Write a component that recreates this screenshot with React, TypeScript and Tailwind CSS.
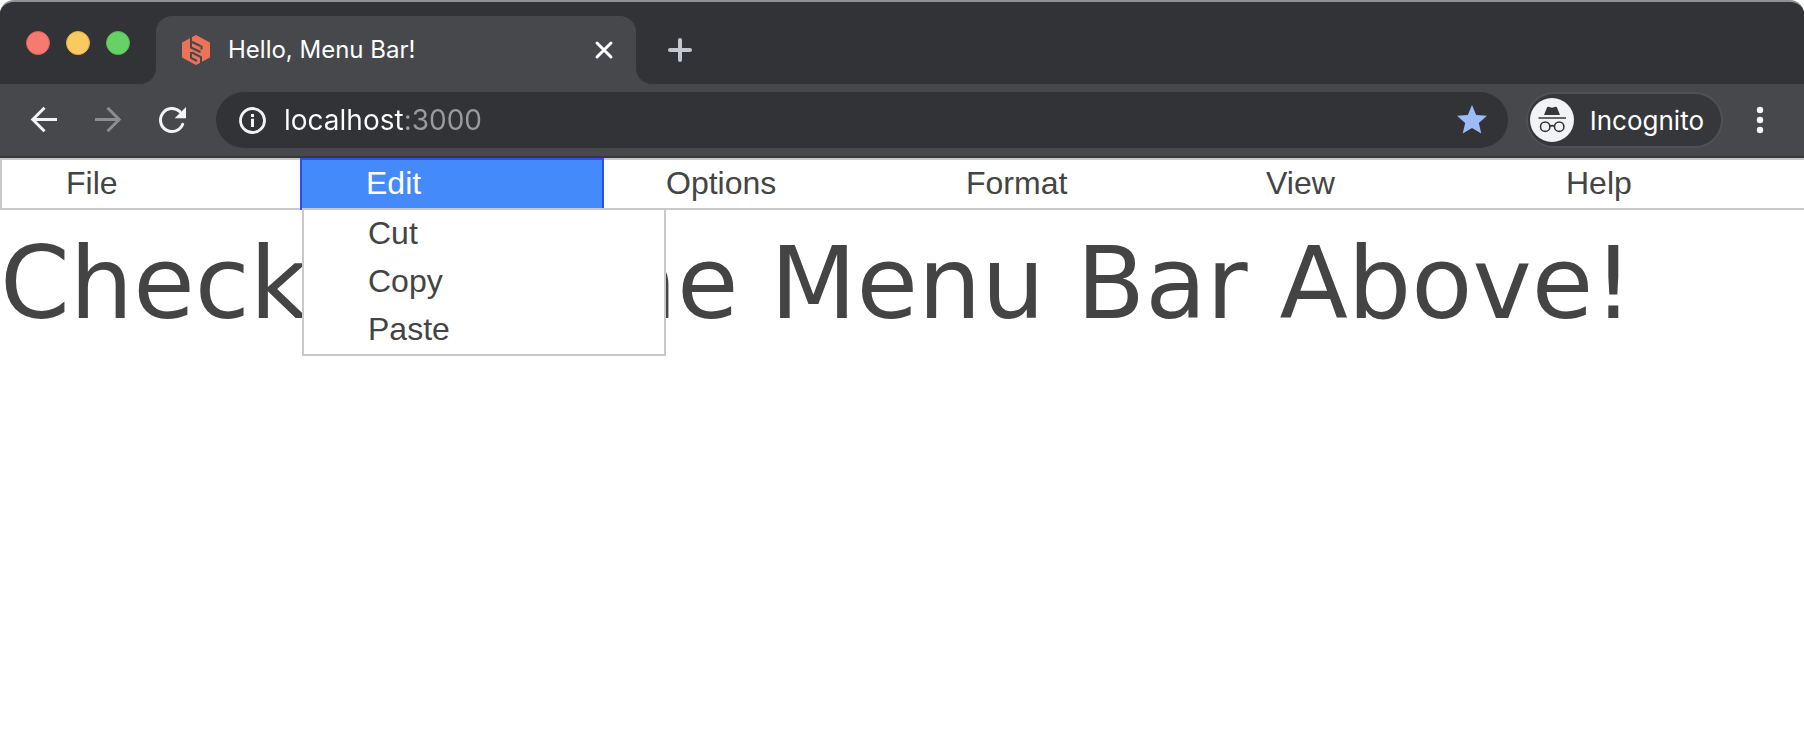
import React, { useState } from "react";

type Menu = { name: string; items: string[] };

const menus: Menu[] = [
  { name: "File", items: ["New", "Open", "Save"] },
  { name: "Edit", items: ["Cut", "Copy", "Paste"] },
  { name: "Options", items: ["Preferences"] },
  { name: "Format", items: ["Font"] },
  { name: "View", items: ["Zoom"] },
  { name: "Help", items: ["About"] },
];

function Favicon() {
  return (
    <svg viewBox="0 0 28 30" className="h-[30px] w-7 shrink-0" aria-hidden="true">
      <path d="M14 0l14 7.500v15L14 30 0 22.500v-15z" fill="#ea7358" />
      <g fill="none" stroke="#47484b" strokeWidth="2">
        <path d="M9 2v4.500l9.500 4.500" />
        <path d="M19.500 14.500v-4M9 7v5.500l9.500 4.500" />
        <path d="M10 17.500l9 4.500v6" />
        <path d="M9 17v6l6 3" />
      </g>
    </svg>
  );
}

function TabStrip() {
  return (
    <div className="flex h-[82px] bg-[#47484b]">
      <div className="flex w-[156px] shrink-0 gap-4 rounded-br-2xl bg-[#323336] pt-[29px] pl-[26px]">
        <button aria-label="Close window" className="size-6 rounded-full border border-[#e0605a] bg-[#f57b71]" />
        <button aria-label="Minimize window" className="size-6 rounded-full border border-[#e2b04c] bg-[#f9ca60]" />
        <button aria-label="Zoom window" className="size-6 rounded-full border border-[#54b851] bg-[#67d168]" />
      </div>
      <div className="w-[480px] bg-[#323336] pt-[14px]">
        <div className="flex h-full items-center rounded-t-2xl bg-[#47484b] pr-[21px] pl-[26px]">
          <Favicon />
          <span className="ml-[18px] flex-1 text-2xl text-white">Hello, Menu Bar!</span>
          <button aria-label="Close tab" className="p-px">
            <svg viewBox="0 0 20 20" className="size-5" stroke="#fff" strokeWidth="3" strokeLinecap="round" aria-hidden="true">
              <path d="M3 3l14 14M17 3L3 17" />
            </svg>
          </button>
        </div>
      </div>
      <div className="flex flex-1 items-center rounded-bl-2xl bg-[#323336] pt-[14px] pb-0 pl-8">
        <button aria-label="New tab">
          <svg viewBox="0 0 24 24" className="size-6" stroke="#c4c7cd" strokeWidth="4" strokeLinecap="round" aria-hidden="true">
            <path d="M12 2v20M2 12h20" />
          </svg>
        </button>
      </div>
    </div>
  );
}

function IncognitoIcon() {
  return (
    <svg viewBox="0 0 44 44" className="size-11 shrink-0" aria-hidden="true">
      <circle cx="22" cy="22" r="22" fill="#f1f3f4" />
      <path d="M14 17l3-7.500q.4-1 1.400-.7l3.600 1 3.600-1q1-.3 1.400.7l3 7.500z" fill="#36373a" />
      <path d="M8.500 20h27.500" stroke="#36373a" strokeWidth="1.500" />
      <g fill="none" stroke="#36373a" strokeWidth="1.600">
        <circle cx="15.200" cy="28.700" r="4.700" />
        <circle cx="29.200" cy="28.700" r="4.700" />
        <path d="M19.900 28.200q2.300-1.200 4.600 0" />
      </g>
    </svg>
  );
}

function Toolbar() {
  return (
    <div className="flex h-[74px] items-center border-b-2 border-[#38383a] bg-[#47484b] pr-[37px] pl-6">
      <button aria-label="Back" className="mr-6">
        <svg viewBox="0 0 40 40" className="size-10" fill="none" stroke="#f1f3f4" strokeWidth="3" aria-hidden="true">
          <path d="M33 19.500H9M20.500 7.800L8.800 19.500l11.700 11.700" />
        </svg>
      </button>
      <button aria-label="Forward" className="mr-6">
        <svg viewBox="0 0 40 40" className="size-10" fill="none" stroke="#8c8d91" strokeWidth="3" aria-hidden="true">
          <path d="M7 19.500h24M19.500 7.800l11.700 11.700-11.700 11.700" />
        </svg>
      </button>
      <button aria-label="Reload" className="mr-6">
        <svg viewBox="0 0 40 40" className="size-10" aria-hidden="true">
          <path d="M30.700 24.300a11.500 11.500 0 1 1-2.800-12.600" fill="none" stroke="#f1f3f4" strokeWidth="3" strokeLinecap="round" />
          <path d="M34 7v11.300H22.700z" fill="#f1f3f4" />
        </svg>
      </button>
      <div className="flex h-14 min-w-0 flex-1 items-center rounded-full bg-[#323336] pr-[18px] pl-[22px]">
        <svg viewBox="0 0 28 28" className="size-7 shrink-0" aria-hidden="true">
          <circle cx="14.500" cy="14.500" r="12" fill="none" stroke="#f1f3f4" strokeWidth="2.800" />
          <path d="M13 12.800h3V21h-3zM13 8h3v3h-3z" fill="#f1f3f4" />
        </svg>
        <input
          aria-label="Address"
          defaultValue="localhost:3000"
          className="ml-[18px] min-w-0 flex-1 bg-[linear-gradient(to_right,#ffffff_119px,#9a9b9d_119px)] bg-clip-text text-[28px] leading-10 text-transparent caret-white outline-none"
        />
        <button aria-label="Bookmark this page">
          <svg viewBox="0 0 24 24" className="size-9" fill="#9bbcf6" aria-hidden="true">
            <path d="M12 17.270 18.180 21l-1.640-7.030L22 9.240l-7.190-.61L12 2 9.190 8.630 2 9.240l5.460 4.730L5.820 21z" />
          </svg>
        </button>
      </div>
      <button className="ml-[18px] flex h-14 items-center rounded-full border-2 border-[#505155] bg-[#36373a] pr-[17px] pl-0.5 text-[26px] text-white">
        <IncognitoIcon />
        <span className="ml-4">Incognito</span>
      </button>
      <button aria-label="Browser menu" className="ml-[30px]">
        <svg viewBox="0 0 14 28" className="h-7 w-[14px]" fill="#f1f3f4" aria-hidden="true">
          <circle cx="7" cy="4" r="3.200" />
          <circle cx="7" cy="14" r="3.200" />
          <circle cx="7" cy="24" r="3.200" />
        </svg>
      </button>
    </div>
  );
}

function MenuBar() {
  const [open, setOpen] = useState("Edit");
  return (
    <nav className="relative z-10 border-y-2 border-l-2 border-[#c9c9c9] bg-white font-['Liberation_Sans',Arial,sans-serif] text-[32px] leading-[46px]">
      <ul className="flex">
        {menus.map(({ name, items }) => {
          const active = open === name;
          return (
            <li key={name} className="relative w-75">
              <button
                aria-expanded={active}
                onClick={() => setOpen(active ? "" : name)}
                className={
                  active
                    ? "block w-full bg-[#448afa] px-16 pb-0.5 text-left text-white outline-2 outline-[#2a51f0]"
                    : "block w-full px-16 pb-0.5 text-left"
                }
              >
                {name}
              </button>
              {active && (
                <ul className="absolute top-full left-0 w-[364px] border-2 border-[#c9c9c9] bg-white">
                  {items.map((item) => (
                    <li key={item}>
                      <button className="block w-full px-16 pb-0.5 text-left">{item}</button>
                    </li>
                  ))}
                </ul>
              )}
            </li>
          );
        })}
      </ul>
    </nav>
  );
}

export default function App() {
  return (
    <div className="min-h-screen bg-white text-[#444444]">
      <header className="overflow-hidden rounded-t-[14px] border-t-2 border-[#8f9193] font-[Inter,sans-serif]">
        <TabStrip />
        <Toolbar />
      </header>
      <MenuBar />
      <main>
        <h1 className="pt-3 font-['DejaVu_Sans',Verdana,sans-serif] text-[100px] leading-[124px]">
          Check Out The Menu Bar Above!
        </h1>
      </main>
    </div>
  );
}
